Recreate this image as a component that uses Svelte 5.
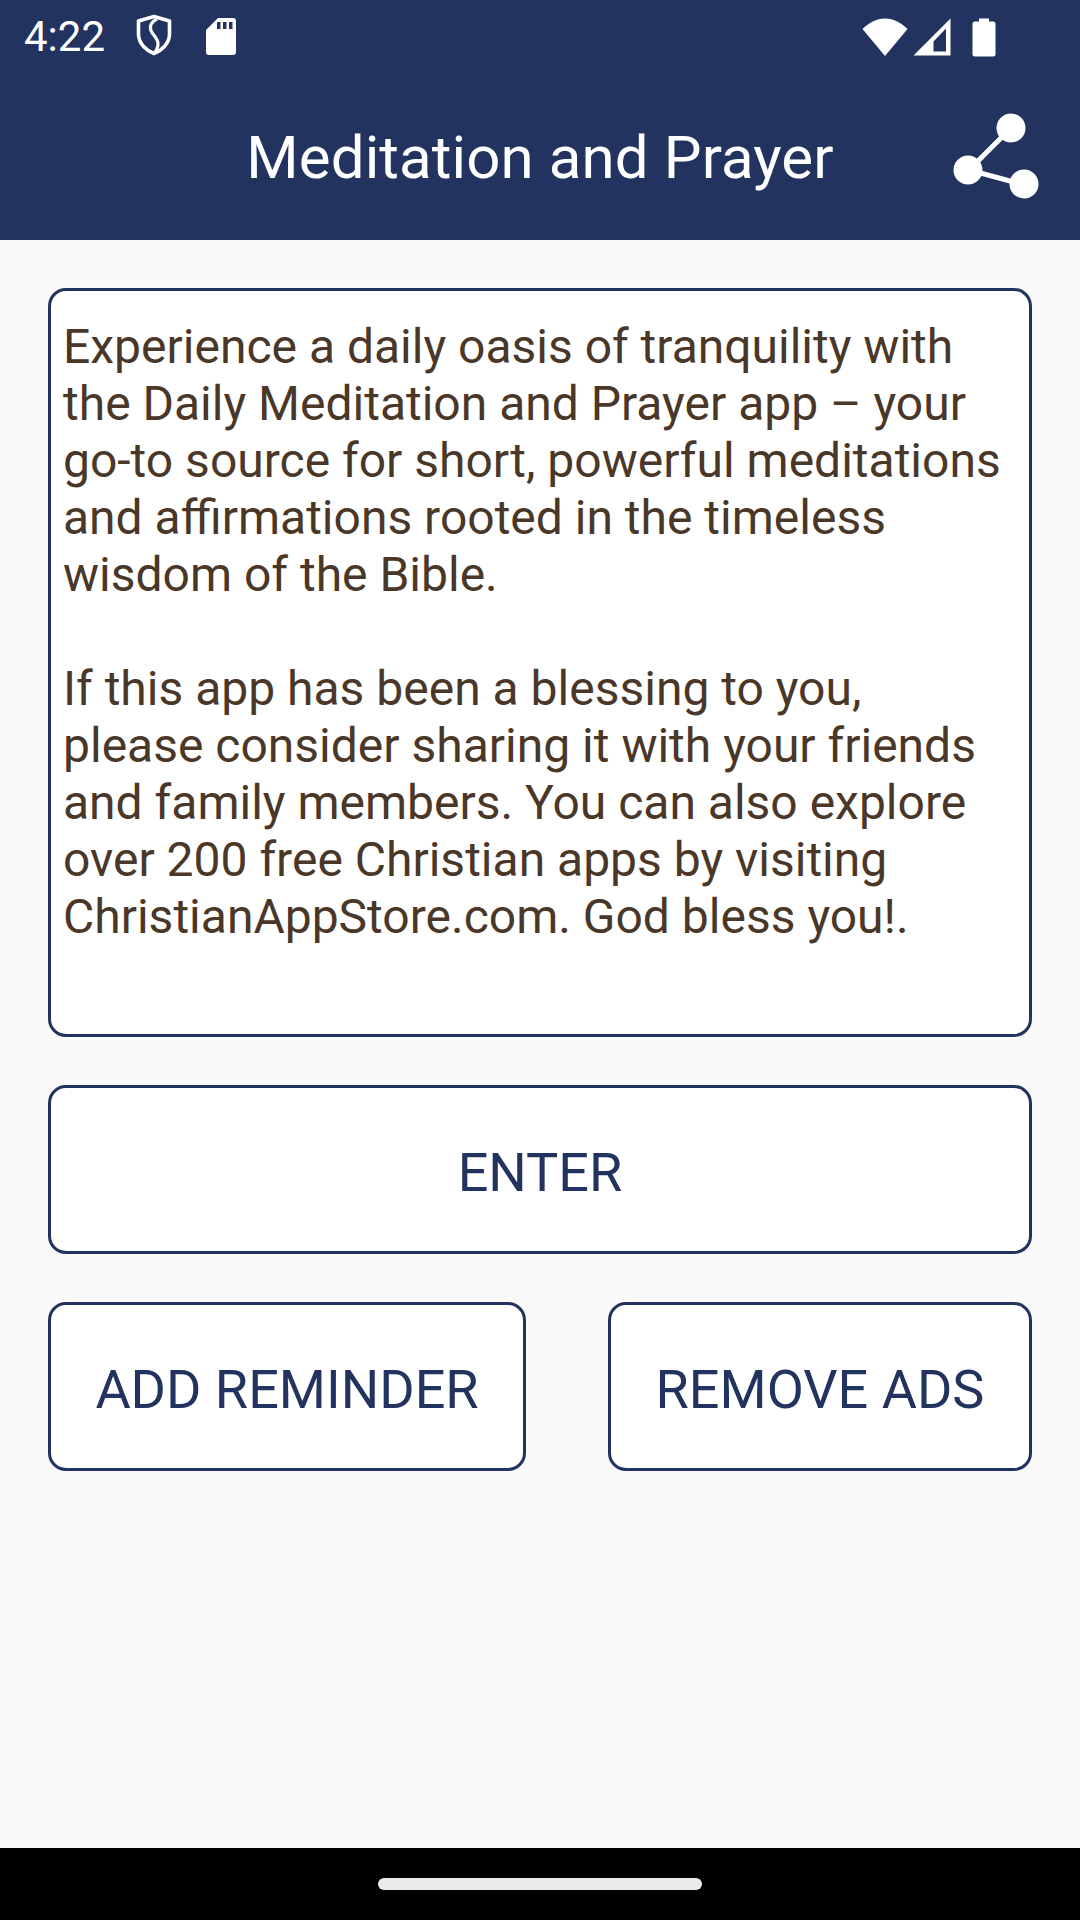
<script>
  const paragraphs = [
    ["Experience a daily oasis of tranquility with", "the Daily Meditation and Prayer app – your", "go-to source for short, powerful meditations", "and affirmations rooted in the timeless", "wisdom of the Bible."],
    ["If this app has been a blessing to you,", "please consider sharing it with your friends", "and family members. You can also explore", "over 200 free Christian apps by visiting", "ChristianAppStore.com. God bless you!."]
  ];
</script>

<div class="screen">
  <header class="top">
    <div class="status">
      <span class="time">4:22</span>
      <svg class="shield" width="36" height="42" viewBox="0 0 36 42" aria-hidden="true">
        <path d="M18 2.500 L33.500 7 V20 C33.500 29 26.500 36 18 39.500 C9.500 36 2.500 29 2.500 20 V7 Z" fill="none" stroke="#fff" stroke-width="3.600" stroke-linejoin="round"/>
        <path d="M21 5 C13 9 13 15 17 20 C21 25 25 30 19 38" fill="none" stroke="#fff" stroke-width="3.200"/>
      </svg>
      <svg class="sd" width="32" height="39" viewBox="0 0 32 39" aria-hidden="true">
        <path fill-rule="evenodd" fill="#fff" d="M13 1 H28 a3 3 0 0 1 3 3 V35 a3 3 0 0 1 -3 3 H4 a3 3 0 0 1 -3 -3 V13 Z M12 5 V12 H15.500 V5 Z M18 5 V12 H21.500 V5 Z M24 5 V12 H27.500 V5 Z"/>
      </svg>
      <span class="spacer"></span>
      <svg class="wifi" width="46" height="38" viewBox="0 0 46 38" aria-hidden="true">
        <path fill="#fff" d="M23 38 L0.500 11 C7 5 14 0.500 23 0.500 C32 0.500 39 5 45.500 11 Z"/>
      </svg>
      <svg class="signal" width="38" height="38" viewBox="0 0 38 38" aria-hidden="true">
        <path fill-rule="evenodd" fill="#fff" d="M37.500 0.500 V37.500 H0.500 Z M33 10.500 L20.500 23.500 V33.500 H33 Z"/>
      </svg>
      <svg class="battery" width="24" height="39" viewBox="0 0 24 39" aria-hidden="true">
        <path fill="#fff" d="M7 0.500 H17 V3.500 H21 a2.500 2.500 0 0 1 2.500 2.500 V36 a2.500 2.500 0 0 1 -2.500 2.500 H3 a2.500 2.500 0 0 1 -2.500 -2.500 V6 A2.500 2.500 0 0 1 3 3.500 H7 Z"/>
      </svg>
    </div>
    <div class="bar">
      <h1>Meditation and Prayer</h1>
      <svg class="share" width="86" height="86" viewBox="0 0 86 86" aria-hidden="true">
        <path d="M58 15 L16 57 L72 72" fill="none" stroke="#fff" stroke-width="5"/>
        <circle cx="58" cy="15" r="14.500" fill="#fff"/>
        <circle cx="15" cy="57" r="14.500" fill="#fff"/>
        <circle cx="71" cy="71" r="14.500" fill="#fff"/>
      </svg>
    </div>
  </header>

  <main>
    <section class="box message">
      {#each paragraphs as lines}
        <p>
          {#each lines as line}
            <span>{line}</span>
          {/each}
        </p>
      {/each}
    </section>
    <button class="box enter">ENTER</button>
    <div class="row">
      <button class="box reminder">ADD REMINDER</button>
      <button class="box ads">REMOVE ADS</button>
    </div>
  </main>

  <footer>
    <div class="pill"></div>
  </footer>
</div>

<style>
  :global(body) {
    margin: 0;
    background: #fafafa;
  }
  .screen {
    width: 1080px;
    height: 1920px;
    display: flex;
    flex-direction: column;
    font-family: Roboto, sans-serif;
    overflow: hidden;
  }
  .top {
    height: 240px;
    background: #22335f;
    color: #fff;
    flex: none;
  }
  .status {
    height: 72px;
    display: flex;
    align-items: center;
    padding: 2px 84px 0 24px;
    box-sizing: border-box;
  }
  .time {
    font-size: 42px;
    width: 112px;
    line-height: 70px;
  }
  .shield { margin-right: 33px; margin-top: -4px; }
  .sd { margin-top: -1px; }
  .spacer { flex: 1; }
  .wifi { margin-right: 2px; }
  .signal { margin-left: 3px; }
  .battery { margin-left: 21px; }
  .bar {
    position: relative;
    height: 168px;
    display: flex;
    align-items: center;
    justify-content: center;
  }
  h1 {
    margin: 4px 0 0;
    font-size: 60px;
    letter-spacing: 0.1px;
    font-weight: 400;
    line-height: 72px;
  }
  .share {
    position: absolute;
    right: 41px;
    top: 41px;
  }
  main {
    flex: 1;
    padding: 48px 48px 0;
    display: flex;
    flex-direction: column;
  }
  .box {
    box-sizing: border-box;
    border: 3px solid #22335f;
    border-radius: 18px;
    background: #fff;
  }
  .message {
    height: 749px;
    padding: 27px 12px 0;
    color: #4a3728;
    font-size: 48px;
    line-height: 57px;
  }
  p {
    margin: 0 0 57px;
  }
  p span {
    display: block;
    white-space: nowrap;
  }
  button {
    padding: 6px 0 0;
    color: #22335f;
    font: inherit;
    font-size: 54px;
    line-height: 60px;
  }
  .enter {
    height: 169px;
    margin-top: 48px;
  }
  .row {
    margin-top: 48px;
    display: flex;
    justify-content: space-between;
  }
  .row button { height: 169px; }
  .reminder { width: 478px; }
  .ads { width: 424px; }
  footer {
    height: 72px;
    background: #000;
    flex: none;
    display: flex;
    justify-content: center;
    padding-top: 30px;
    box-sizing: border-box;
  }
  .pill {
    width: 324px;
    height: 12px;
    border-radius: 6px;
    background: #eaeaea;
  }
</style>
